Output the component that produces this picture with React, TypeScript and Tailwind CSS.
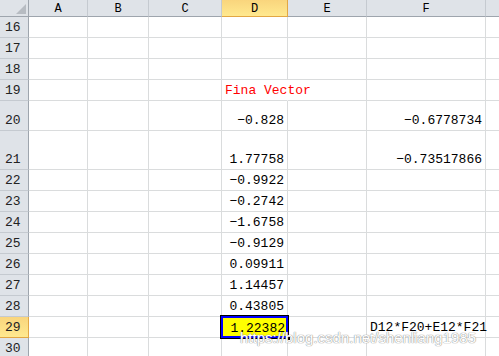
import React from 'react'

type Row = {
  n: number
  h: string
  d?: string
  f?: string
  red?: string
  formula?: string
}

const rows: Row[] = [
  { n: 16, h: 'h-[21px]' },
  { n: 17, h: 'h-[21px]' },
  { n: 18, h: 'h-[21px]' },
  { n: 19, h: 'h-[21px]', red: 'Fina Vector' },
  { n: 20, h: 'h-[30px]', d: '−0.828', f: '−0.6778734' },
  { n: 21, h: 'h-[39px]', d: '1.77758', f: '−0.73517866' },
  { n: 22, h: 'h-[21px]', d: '−0.9922' },
  { n: 23, h: 'h-[21px]', d: '−0.2742' },
  { n: 24, h: 'h-[21px]', d: '−1.6758' },
  { n: 25, h: 'h-[21px]', d: '−0.9129' },
  { n: 26, h: 'h-[21px]', d: '0.09911' },
  { n: 27, h: 'h-[21px]', d: '1.14457' },
  { n: 28, h: 'h-[21px]', d: '0.43805' },
  { n: 29, h: 'h-[21px]', d: '1.22382', formula: 'D12*F20+E12*F21' },
  { n: 30, h: 'h-[21px]' },
]

const cols = ['A', 'B', 'C', 'D', 'E', 'F', '']

const cell = 'border-r border-b border-[#dadcdd] flex items-end pb-[3px] leading-none'

const App = () => {
  return (
    <div className="relative w-[499px] h-[356px] overflow-hidden bg-white font-['Liberation_Mono',monospace] text-[13px] text-black">
      <div className="grid grid-cols-[29px_59px_61px_73px_66px_79px_119px_40px]">
        {/* corner */}
        <div className="h-[17px] bg-[#dfe3e8] border-r border-b border-[#9ea5ad] flex items-end justify-end p-[2px]">
          <div className="w-0 h-0 border-l-[10px] border-l-transparent border-b-[10px] border-b-[#b7bcc2]" />
        </div>
        {cols.map((c, i) => (
          <div
            key={i}
            className={
              c === 'D'
                ? 'h-[17px] border-r border-b border-[#e2a744] bg-gradient-to-b from-[#f9d57d] to-[#ffe98f] flex items-center justify-center text-[12px] leading-none pt-[1px]'
                : 'h-[17px] border-r border-b border-[#9ea5ad] bg-[#dfe3e8] flex items-center justify-center text-[12px] leading-none pt-[1px] border-r-[#c5cad0]'
            }
          >
            {c}
          </div>
        ))}

        {rows.map(r => (
          <React.Fragment key={r.n}>
            <div
              className={
                r.n === 29
                  ? `${r.h} border-r border-b border-[#e2a744] bg-gradient-to-b from-[#f9d57d] to-[#ffe98f] flex items-end pl-[5px] pb-[3px] leading-none text-[13px] text-[#222]`
                  : `${r.h} border-r border-b border-r-[#9ea5ad] border-b-[#c5cad0] bg-[#dfe3e8] flex items-end pl-[5px] pb-[3px] leading-none text-[13px] text-[#222]`
              }
            >
              {r.n}
            </div>
            <div className={`${r.h} ${cell}`} />
            <div className={`${r.h} ${cell}`} />
            <div className={`${r.h} ${cell}`} />
            <div className={`${r.h} ${cell} relative justify-end pr-[3px] ${r.red ? 'border-r-transparent' : ''}`}>
              {r.d}
              {r.red && (
                <span className="absolute left-[3px] bottom-[3px] text-[#ff0000] whitespace-nowrap">{r.red}</span>
              )}
              {r.formula && (
                <div className="absolute -left-[2px] -top-[2px] w-[69px] h-[24px] border border-black">
                  <div className="w-full h-full border-2 border-[#0000ff] bg-[#ffff00] flex items-end justify-end pr-[1px] pb-[1px]">
                    {r.d}
                  </div>
                  <div className="absolute -right-[3px] -bottom-[3px] w-[5px] h-[5px] bg-black border border-white" />
                </div>
              )}
            </div>
            <div className={`${r.h} ${cell}`} />
            <div className={`${r.h} ${cell} ${r.formula ? 'justify-start pl-[3px]' : 'justify-end pr-[3px]'}`}>
              {r.f}
              {r.formula}
            </div>
            <div className={`${r.h} ${cell}`} />
          </React.Fragment>
        ))}
      </div>

      {/* watermark */}
      <div className="absolute left-[240px] top-[330px] font-['Liberation_Sans',sans-serif] text-[15px] leading-none text-white [text-shadow:0_0_1px_#8a8a8a,0_0_1px_#8a8a8a] whitespace-nowrap">
        https://blog.csdn.net/shenliang1985
      </div>
    </div>
  )
}

export default App
